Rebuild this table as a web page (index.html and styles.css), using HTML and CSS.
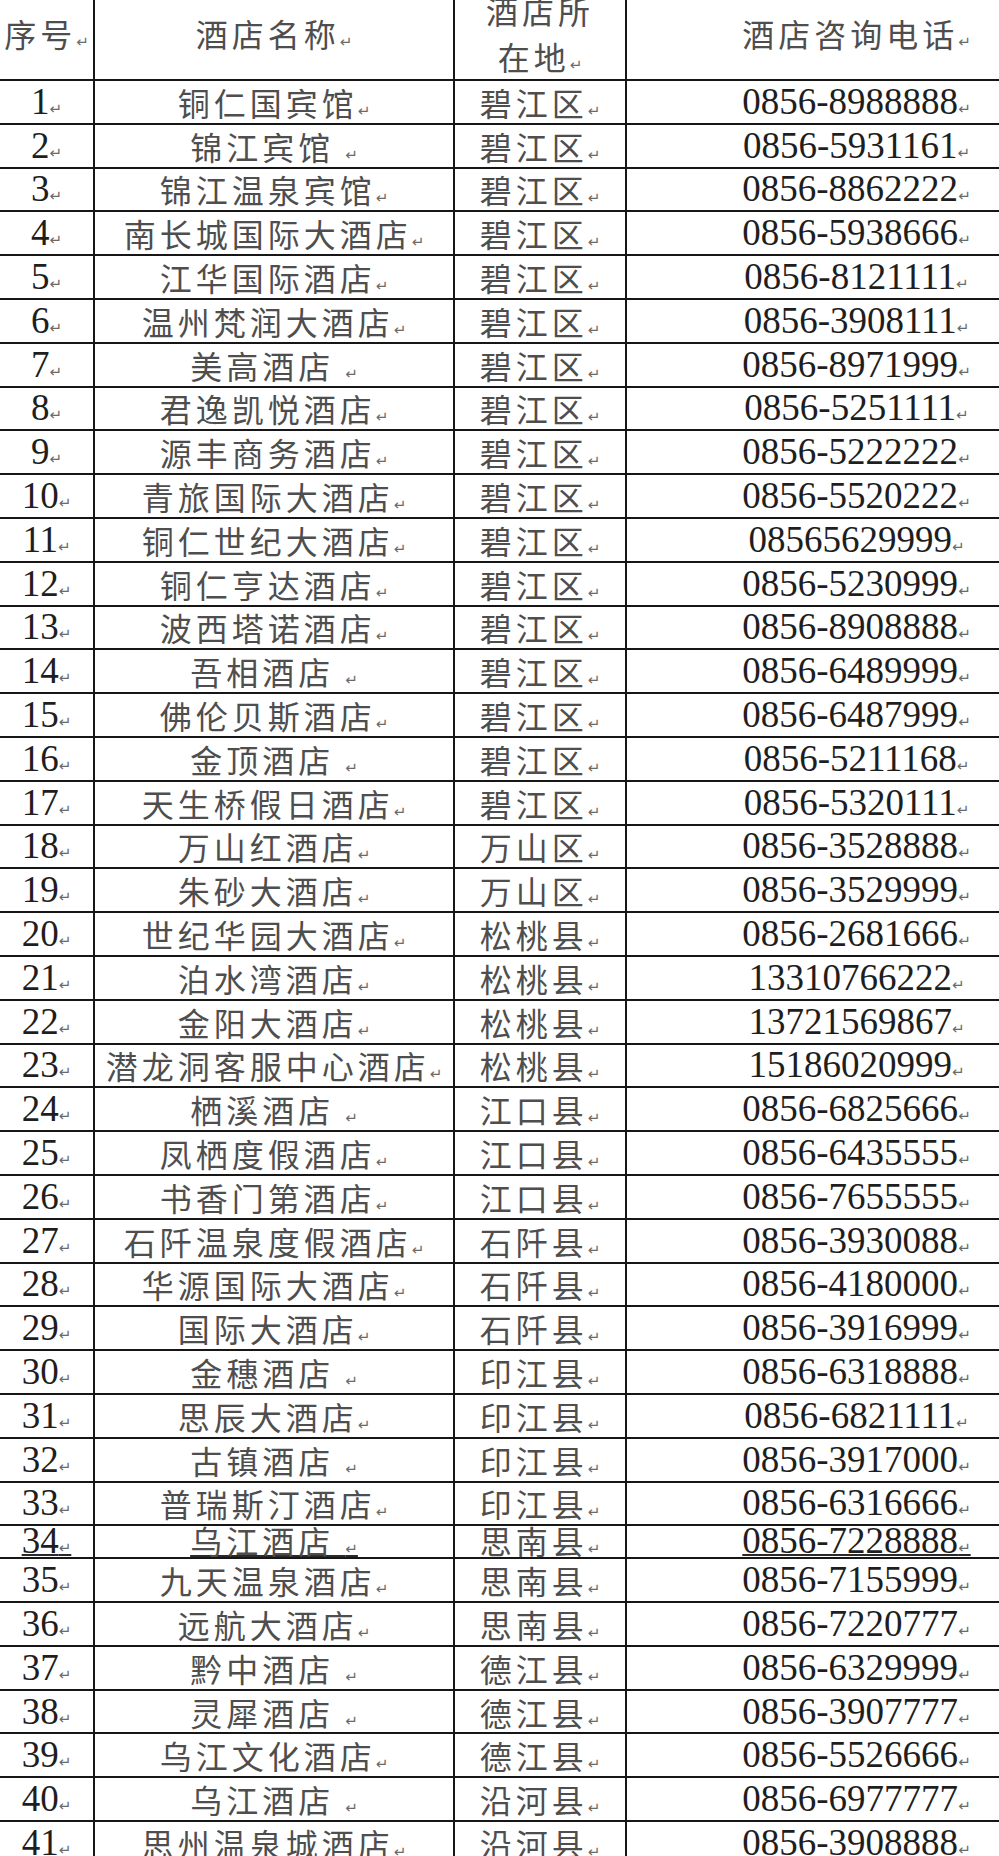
FILE: index.html
```html
<!DOCTYPE html>
<html lang="zh-CN">
<head>
<meta charset="utf-8">
<title>铜仁市酒店咨询电话</title>
<link rel="stylesheet" href="styles.css">
</head>
<body>
<table class="hotels">
  <colgroup>
    <col class="c-no">
    <col class="c-name">
    <col class="c-area">
    <col class="c-tel">
  </colgroup>
  <thead>
    <tr class="head">
      <th class="zh">序号<i class="pm">↵</i></th>
      <th class="zh">酒店名称<i class="pm">↵</i></th>
      <th class="zh">酒店所<br>在地<i class="pm">↵</i></th>
      <th class="zh">酒店咨询电话<i class="pm">↵</i></th>
    </tr>
  </thead>
  <tbody>
    <tr><td class="num">1<i class="pm">↵</i></td><td class="zh">铜仁国宾馆<i class="pm">↵</i></td><td class="zh">碧江区<i class="pm">↵</i></td><td class="num">0856-8988888<i class="pm">↵</i></td></tr>
    <tr><td class="num">2<i class="pm">↵</i></td><td class="zh">锦江宾馆 <i class="pm">↵</i></td><td class="zh">碧江区<i class="pm">↵</i></td><td class="num">0856-5931161<i class="pm">↵</i></td></tr>
    <tr><td class="num">3<i class="pm">↵</i></td><td class="zh">锦江温泉宾馆<i class="pm">↵</i></td><td class="zh">碧江区<i class="pm">↵</i></td><td class="num">0856-8862222<i class="pm">↵</i></td></tr>
    <tr><td class="num">4<i class="pm">↵</i></td><td class="zh">南长城国际大酒店<i class="pm">↵</i></td><td class="zh">碧江区<i class="pm">↵</i></td><td class="num">0856-5938666<i class="pm">↵</i></td></tr>
    <tr><td class="num">5<i class="pm">↵</i></td><td class="zh">江华国际酒店<i class="pm">↵</i></td><td class="zh">碧江区<i class="pm">↵</i></td><td class="num">0856-8121111<i class="pm">↵</i></td></tr>
    <tr><td class="num">6<i class="pm">↵</i></td><td class="zh">温州梵润大酒店<i class="pm">↵</i></td><td class="zh">碧江区<i class="pm">↵</i></td><td class="num">0856-3908111<i class="pm">↵</i></td></tr>
    <tr><td class="num">7<i class="pm">↵</i></td><td class="zh">美高酒店 <i class="pm">↵</i></td><td class="zh">碧江区<i class="pm">↵</i></td><td class="num">0856-8971999<i class="pm">↵</i></td></tr>
    <tr><td class="num">8<i class="pm">↵</i></td><td class="zh">君逸凯悦酒店<i class="pm">↵</i></td><td class="zh">碧江区<i class="pm">↵</i></td><td class="num">0856-5251111<i class="pm">↵</i></td></tr>
    <tr><td class="num">9<i class="pm">↵</i></td><td class="zh">源丰商务酒店<i class="pm">↵</i></td><td class="zh">碧江区<i class="pm">↵</i></td><td class="num">0856-5222222<i class="pm">↵</i></td></tr>
    <tr><td class="num">10<i class="pm">↵</i></td><td class="zh">青旅国际大酒店<i class="pm">↵</i></td><td class="zh">碧江区<i class="pm">↵</i></td><td class="num">0856-5520222<i class="pm">↵</i></td></tr>
    <tr><td class="num">11<i class="pm">↵</i></td><td class="zh">铜仁世纪大酒店<i class="pm">↵</i></td><td class="zh">碧江区<i class="pm">↵</i></td><td class="num">08565629999<i class="pm">↵</i></td></tr>
    <tr><td class="num">12<i class="pm">↵</i></td><td class="zh">铜仁亨达酒店<i class="pm">↵</i></td><td class="zh">碧江区<i class="pm">↵</i></td><td class="num">0856-5230999<i class="pm">↵</i></td></tr>
    <tr><td class="num">13<i class="pm">↵</i></td><td class="zh">波西塔诺酒店<i class="pm">↵</i></td><td class="zh">碧江区<i class="pm">↵</i></td><td class="num">0856-8908888<i class="pm">↵</i></td></tr>
    <tr><td class="num">14<i class="pm">↵</i></td><td class="zh">吾相酒店 <i class="pm">↵</i></td><td class="zh">碧江区<i class="pm">↵</i></td><td class="num">0856-6489999<i class="pm">↵</i></td></tr>
    <tr><td class="num">15<i class="pm">↵</i></td><td class="zh">佛伦贝斯酒店<i class="pm">↵</i></td><td class="zh">碧江区<i class="pm">↵</i></td><td class="num">0856-6487999<i class="pm">↵</i></td></tr>
    <tr><td class="num">16<i class="pm">↵</i></td><td class="zh">金顶酒店 <i class="pm">↵</i></td><td class="zh">碧江区<i class="pm">↵</i></td><td class="num">0856-5211168<i class="pm">↵</i></td></tr>
    <tr><td class="num">17<i class="pm">↵</i></td><td class="zh">天生桥假日酒店<i class="pm">↵</i></td><td class="zh">碧江区<i class="pm">↵</i></td><td class="num">0856-5320111<i class="pm">↵</i></td></tr>
    <tr><td class="num">18<i class="pm">↵</i></td><td class="zh">万山红酒店<i class="pm">↵</i></td><td class="zh">万山区<i class="pm">↵</i></td><td class="num">0856-3528888<i class="pm">↵</i></td></tr>
    <tr><td class="num">19<i class="pm">↵</i></td><td class="zh">朱砂大酒店<i class="pm">↵</i></td><td class="zh">万山区<i class="pm">↵</i></td><td class="num">0856-3529999<i class="pm">↵</i></td></tr>
    <tr><td class="num">20<i class="pm">↵</i></td><td class="zh">世纪华园大酒店<i class="pm">↵</i></td><td class="zh">松桃县<i class="pm">↵</i></td><td class="num">0856-2681666<i class="pm">↵</i></td></tr>
    <tr><td class="num">21<i class="pm">↵</i></td><td class="zh">泊水湾酒店<i class="pm">↵</i></td><td class="zh">松桃县<i class="pm">↵</i></td><td class="num">13310766222<i class="pm">↵</i></td></tr>
    <tr><td class="num">22<i class="pm">↵</i></td><td class="zh">金阳大酒店<i class="pm">↵</i></td><td class="zh">松桃县<i class="pm">↵</i></td><td class="num">13721569867<i class="pm">↵</i></td></tr>
    <tr><td class="num">23<i class="pm">↵</i></td><td class="zh">潜龙洞客服中心酒店<i class="pm">↵</i></td><td class="zh">松桃县<i class="pm">↵</i></td><td class="num">15186020999<i class="pm">↵</i></td></tr>
    <tr><td class="num">24<i class="pm">↵</i></td><td class="zh">栖溪酒店 <i class="pm">↵</i></td><td class="zh">江口县<i class="pm">↵</i></td><td class="num">0856-6825666<i class="pm">↵</i></td></tr>
    <tr><td class="num">25<i class="pm">↵</i></td><td class="zh">凤栖度假酒店<i class="pm">↵</i></td><td class="zh">江口县<i class="pm">↵</i></td><td class="num">0856-6435555<i class="pm">↵</i></td></tr>
    <tr><td class="num">26<i class="pm">↵</i></td><td class="zh">书香门第酒店<i class="pm">↵</i></td><td class="zh">江口县<i class="pm">↵</i></td><td class="num">0856-7655555<i class="pm">↵</i></td></tr>
    <tr><td class="num">27<i class="pm">↵</i></td><td class="zh">石阡温泉度假酒店<i class="pm">↵</i></td><td class="zh">石阡县<i class="pm">↵</i></td><td class="num">0856-3930088<i class="pm">↵</i></td></tr>
    <tr><td class="num">28<i class="pm">↵</i></td><td class="zh">华源国际大酒店<i class="pm">↵</i></td><td class="zh">石阡县<i class="pm">↵</i></td><td class="num">0856-4180000<i class="pm">↵</i></td></tr>
    <tr><td class="num">29<i class="pm">↵</i></td><td class="zh">国际大酒店<i class="pm">↵</i></td><td class="zh">石阡县<i class="pm">↵</i></td><td class="num">0856-3916999<i class="pm">↵</i></td></tr>
    <tr><td class="num">30<i class="pm">↵</i></td><td class="zh">金穗酒店 <i class="pm">↵</i></td><td class="zh">印江县<i class="pm">↵</i></td><td class="num">0856-6318888<i class="pm">↵</i></td></tr>
    <tr><td class="num">31<i class="pm">↵</i></td><td class="zh">思辰大酒店<i class="pm">↵</i></td><td class="zh">印江县<i class="pm">↵</i></td><td class="num">0856-6821111<i class="pm">↵</i></td></tr>
    <tr><td class="num">32<i class="pm">↵</i></td><td class="zh">古镇酒店 <i class="pm">↵</i></td><td class="zh">印江县<i class="pm">↵</i></td><td class="num">0856-3917000<i class="pm">↵</i></td></tr>
    <tr><td class="num">33<i class="pm">↵</i></td><td class="zh">普瑞斯汀酒店<i class="pm">↵</i></td><td class="zh">印江县<i class="pm">↵</i></td><td class="num">0856-6316666<i class="pm">↵</i></td></tr>
    <tr class="short"><td class="num"><u>34<i class="pm">↵</i></u></td><td class="zh"><u>乌江酒店 <i class="pm">↵</i></u></td><td class="zh">思南县<i class="pm">↵</i></td><td class="num"><u>0856-7228888<i class="pm">↵</i></u></td></tr>
    <tr><td class="num">35<i class="pm">↵</i></td><td class="zh">九天温泉酒店<i class="pm">↵</i></td><td class="zh">思南县<i class="pm">↵</i></td><td class="num">0856-7155999<i class="pm">↵</i></td></tr>
    <tr><td class="num">36<i class="pm">↵</i></td><td class="zh">远航大酒店<i class="pm">↵</i></td><td class="zh">思南县<i class="pm">↵</i></td><td class="num">0856-7220777<i class="pm">↵</i></td></tr>
    <tr><td class="num">37<i class="pm">↵</i></td><td class="zh">黔中酒店 <i class="pm">↵</i></td><td class="zh">德江县<i class="pm">↵</i></td><td class="num">0856-6329999<i class="pm">↵</i></td></tr>
    <tr><td class="num">38<i class="pm">↵</i></td><td class="zh">灵犀酒店 <i class="pm">↵</i></td><td class="zh">德江县<i class="pm">↵</i></td><td class="num">0856-3907777<i class="pm">↵</i></td></tr>
    <tr><td class="num">39<i class="pm">↵</i></td><td class="zh">乌江文化酒店<i class="pm">↵</i></td><td class="zh">德江县<i class="pm">↵</i></td><td class="num">0856-5526666<i class="pm">↵</i></td></tr>
    <tr><td class="num">40<i class="pm">↵</i></td><td class="zh">乌江酒店 <i class="pm">↵</i></td><td class="zh">沿河县<i class="pm">↵</i></td><td class="num">0856-6977777<i class="pm">↵</i></td></tr>
    <tr><td class="num">41<i class="pm">↵</i></td><td class="zh">思州温泉城酒店<i class="pm">↵</i></td><td class="zh">沿河县<i class="pm">↵</i></td><td class="num">0856-3908888<i class="pm">↵</i></td></tr>
  </tbody>
</table>
</body>
</html>
```

FILE: styles.css
```css
html, body {
  margin: 0;
  padding: 0;
  background: #ffffff;
  overflow: hidden;
}

.hotels {
  border-collapse: collapse;
  table-layout: fixed;
  width: 1086px;
  margin-top: -13px;
}

.c-no { width: 94px; }
.c-name { width: 360px; }
.c-area { width: 172px; }
.c-tel { width: 460px; }

.hotels th,
.hotels td {
  padding: 0;
  text-align: center;
  vertical-align: middle;
  white-space: nowrap;
  border-right: 2px solid #161616;
  border-bottom: 2px solid #161616;
  font-weight: normal;
  line-height: 36px;
}

.hotels tr > :last-child {
  border-right: none;
}

.hotels .head {
  height: 92px;
}

.hotels .head th {
  line-height: 46px;
}

.hotels tbody tr {
  height: 43.8px;
}

.hotels tbody tr.short {
  height: 33px;
}

.hotels tr.short td {
  line-height: 28px;
}

.zh {
  font-family: "Noto Sans CJK SC", "Noto Sans CJK JP", sans-serif;
  font-size: 32px;
  letter-spacing: 4px;
  color: #4e4e4e;
}

.num {
  font-family: "Liberation Serif", "Times New Roman", serif;
  font-size: 37px;
  color: #1e1e1e;
}

.pm {
  font-family: "DejaVu Sans", sans-serif;
  font-style: normal;
  font-size: 15px;
  line-height: 1;
  letter-spacing: 0;
  color: #6a6a6a;
}

.short u {
  text-decoration: underline;
  text-decoration-color: #2a2a2a;
  text-decoration-thickness: 2px;
  text-underline-offset: 1px;
}
```
